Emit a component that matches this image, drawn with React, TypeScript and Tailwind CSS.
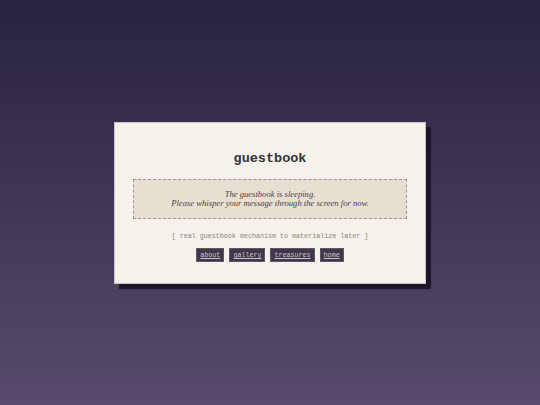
const links = ['about', 'gallery', 'treasures', 'home'];

export default function App() {
  return (
    <div className="min-h-screen w-full bg-gradient-to-b from-[#29233f] to-[#584b6d] flex items-center justify-center">
      <div className="w-[312px] mt-[1px] bg-[#f6f1ea] border border-[#c9c4c4] shadow-[5px_5px_0_#1b1729] px-[18px] pt-[27px] pb-[21px] flex flex-col items-center">
        {/* Title */}
        <h1 className="font-['Liberation_Mono',monospace] font-bold text-[13.5px] leading-[18px] text-[#333]">
          guestbook
        </h1>

        {/* Notice */}
        <div className="w-full mt-[11px] h-[40px] bg-[#e7dfd1] border border-dashed border-[#9c94a0] flex flex-col items-center justify-center font-['Liberation_Serif',serif] italic text-[8.6px] leading-[9px] text-[#47434c]">
          <p>The guestbook is sleeping.</p>
          <p>Please whisper your message through the screen for now.</p>
        </div>

        <p className="mt-[12px] font-['Liberation_Mono',monospace] text-[6.7px] leading-[10px] text-[#8c8886]">
          [ real guestbook mechanism to materialize later ]
        </p>

        {/* Nav */}
        <div className="mt-[7px] flex gap-[5px]">
          {links.map((l) => (
            <a
              key={l}
              href="#"
              className="h-[14px] px-[3px] flex items-center bg-[#403848] border border-[#5f5668] font-['Liberation_Mono',monospace] text-[6.7px] text-[#cdc5d3] underline"
            >
              {l}
            </a>
          ))}
        </div>
      </div>
    </div>
  );
}
